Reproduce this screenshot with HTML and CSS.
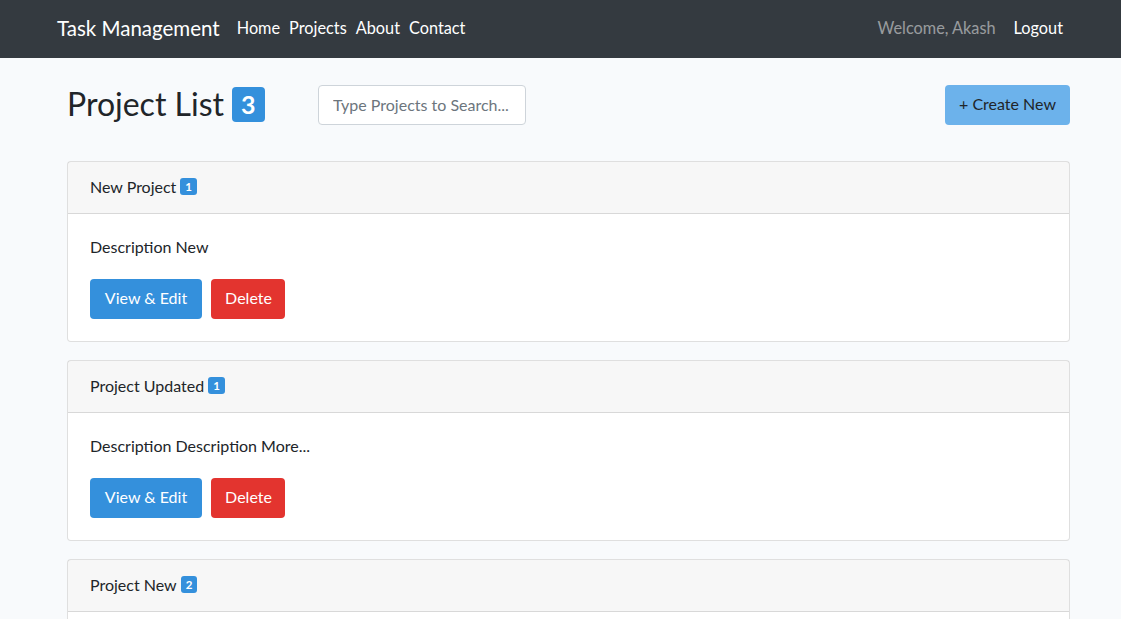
FILE: index.html
```html
<!DOCTYPE html>
<html lang="en">
<head>
    <meta charset="UTF-8">
    <meta name="viewport" content="width=device-width, initial-scale=1.0">
    <title>Task Management</title>
    <link rel="stylesheet" href="styles.css">
</head>
<body>
    <nav class="navbar">
        <div class="nav-left">
            <a class="brand" href="#">Task Management</a>
            <a class="nav-link" href="#">Home</a>
            <a class="nav-link" href="#">Projects</a>
            <a class="nav-link" href="#">About</a>
            <a class="nav-link" href="#">Contact</a>
        </div>
        <div class="nav-right">
            <span class="welcome">Welcome, Akash</span>
            <a class="nav-link logout" href="#">Logout</a>
        </div>
    </nav>

    <main class="container">
        <div class="list-header">
            <h2 class="title">Project List <span class="badge badge-lg">3</span></h2>
            <input type="text" class="search" placeholder="Type Projects to Search...">
            <button class="btn btn-info">+ Create New</button>
        </div>

        <div class="card">
            <div class="card-header">New Project <span class="badge">1</span></div>
            <div class="card-body">
                <p>Description New</p>
                <button class="btn btn-primary">View &amp; Edit</button>
                <button class="btn btn-danger">Delete</button>
            </div>
        </div>

        <div class="card">
            <div class="card-header">Project Updated <span class="badge">1</span></div>
            <div class="card-body">
                <p>Description Description More...</p>
                <button class="btn btn-primary">View &amp; Edit</button>
                <button class="btn btn-danger">Delete</button>
            </div>
        </div>

        <div class="card">
            <div class="card-header">Project New <span class="badge">2</span></div>
            <div class="card-body">
                <p>Description for the new project</p>
                <button class="btn btn-primary">View &amp; Edit</button>
                <button class="btn btn-danger">Delete</button>
            </div>
        </div>
    </main>
</body>
</html>
```

FILE: styles.css
```css
/* Global styles */
body {
    margin: 0;
    font-family: 'Lato', 'Noto Sans', sans-serif;
    font-size: 16px;
    line-height: 1.5;
    color: #212529;
    background-color: #f8fafc;
}

a {
    text-decoration: none;
}

/* Navbar */
.navbar {
    height: 58px;
    box-sizing: border-box;
    background-color: #343a40;
    display: flex;
    align-items: center;
    justify-content: space-between;
    padding: 0 58px 2px 57px;
}

.nav-left,
.nav-right {
    display: flex;
    align-items: center;
}

.brand {
    color: #fff;
    font-size: 20.5px;
    margin-right: 17px;
}

.nav-link {
    color: #fff;
    font-size: 16.3px;
    margin-right: 9px;
}

.welcome {
    color: rgba(255, 255, 255, 0.5);
    font-size: 16.3px;
    margin-right: 18px;
}

.nav-right .logout {
    margin-right: 0;
}

/* Main container */
.container {
    padding: 0 51px 0 67px;
}

.list-header {
    display: flex;
    align-items: center;
    height: 40px;
    margin: 27px 0 36px;
}

.title {
    margin: 0 0 1px;
    font-size: 32px;
    font-weight: 400;
    line-height: 1.2;
    display: flex;
    align-items: center;
    width: 251px;
}

.badge {
    display: inline-block;
    background-color: #3490dc;
    color: #fff;
    font-size: 11.5px;
    font-weight: 700;
    line-height: 1;
    padding: 3px 5px 3px;
    border-radius: 3px;
}

.badge-lg {
    font-size: 25px;
    padding: 5px 9px 5px;
    border-radius: 4px;
    margin-left: 8px;
}

.search {
    width: 208px;
    height: 40px;
    box-sizing: border-box;
    padding: 4px 14px 6px;
    border: 1px solid #ced4da;
    border-radius: 4px;
    font-family: inherit;
    font-size: 16px;
    color: #495057;
    background-color: #fff;
}

.search::placeholder {
    color: #6c757d;
}

.btn {
    height: 40px;
    padding: 0 14px 3px;
    border: none;
    border-radius: 4px;
    font-family: inherit;
    font-size: 16px;
    cursor: pointer;
}

.btn-info {
    margin-left: auto;
    background-color: #6cb2eb;
    color: #212529;
}

.btn-primary {
    background-color: #3490dc;
    color: #fff;
    width: 112px;
}

.btn-danger {
    background-color: #e3342f;
    color: #fff;
    width: 74px;
    margin-left: 5px;
}

/* Cards */
.card {
    background-color: #fff;
    border: 1px solid rgba(0, 0, 0, 0.125);
    border-radius: 4px;
    margin-bottom: 18px;
}

.card-header {
    height: 52px;
    box-sizing: border-box;
    display: flex;
    align-items: center;
    gap: 4px;
    padding: 0 22px 2px;
    background-color: rgba(0, 0, 0, 0.03);
    border-bottom: 1px solid rgba(0, 0, 0, 0.125);
}

.card-body {
    padding: 22px;
}

.card-body p {
    margin: 0 0 21px;
    line-height: 22px;
}
```
